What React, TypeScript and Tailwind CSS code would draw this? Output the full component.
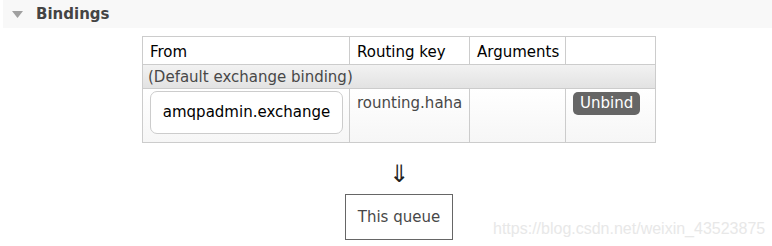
import React from "react"

export default function App() {
  const font = { fontFamily: '"DejaVu Sans", Verdana, sans-serif' }

  return (
    <div className="w-[772px] h-[246px] bg-white relative overflow-hidden" style={font}>
      <div className="ml-[3px] h-[28px] bg-[#f8f8f8] flex items-center pl-[9px]">
        <svg width="11" height="7" viewBox="0 0 11 7" className="mr-[13px]">
          <polygon points="0,0 11,0 5.5,7" fill="#a0a0a0" />
        </svg>
        <span className="text-[15px] font-bold text-[#444444]">Bindings</span>
      </div>

      <div className="flex flex-col items-center mt-[8px]">
        <table className="ml-[26px] w-[514px] border-collapse border border-[#cccccc] text-[15px] text-[#484848]">
          <thead>
            <tr className="h-[28px] bg-white text-black">
              <th className="border border-[#cccccc] font-normal text-left pl-[7px] pt-[4px] w-[207px]">From</th>
              <th className="border border-[#cccccc] font-normal text-left pl-[7px] pt-[4px] w-[120px]">Routing key</th>
              <th className="border border-[#cccccc] font-normal text-left pl-[7px] pt-[4px] w-[96px]">Arguments</th>
              <th className="border border-[#cccccc] font-normal text-left"></th>
            </tr>
          </thead>
          <tbody>
            <tr className="h-[24px] bg-gradient-to-b from-[#f2f2f2] to-[#e2e2e2]">
              <td colSpan={4} className="border border-[#cccccc] pl-[5px] leading-[22px]">
                (Default exchange binding)
              </td>
            </tr>
            <tr className="h-[54px] bg-gradient-to-b from-white to-[#f6f6f6]">
              <td className="border border-[#cccccc] align-top pl-[7px] pt-[2px] pb-[7px]">
                <div className="w-[193px] h-[43px] border border-[#cccccc] rounded-[7px] bg-white flex items-center justify-center text-black">
                  amqpadmin.exchange
                </div>
              </td>
              <td className="border border-[#cccccc] align-top pl-[7px] pt-[3px]">rounting.haha</td>
              <td className="border border-[#cccccc]"></td>
              <td className="border border-[#cccccc] align-top pt-[3px] pl-[7px]">
                <button className="bg-[#666666] text-white rounded-[5px] px-[7px] h-[23px] leading-[23px] text-[15px]">
                  Unbind
                </button>
              </td>
            </tr>
          </tbody>
        </table>

        <div className="ml-[26px] mt-[17px] text-[24px] leading-[28px] text-[#222]">⇓</div>

        <div className="ml-[26px] mt-[6px] w-[108px] h-[46px] border border-[#666666] flex items-center justify-center text-[15px] text-[#484848]">
          This queue
        </div>
      </div>

      <div className="absolute left-[493px] top-[217px] text-[16px] text-[#e8e8e8]" style={{ fontFamily: '"Liberation Sans", Arial, sans-serif' }}>
        https://blog.csdn.net/weixin_43523875
      </div>
    </div>
  )
}
